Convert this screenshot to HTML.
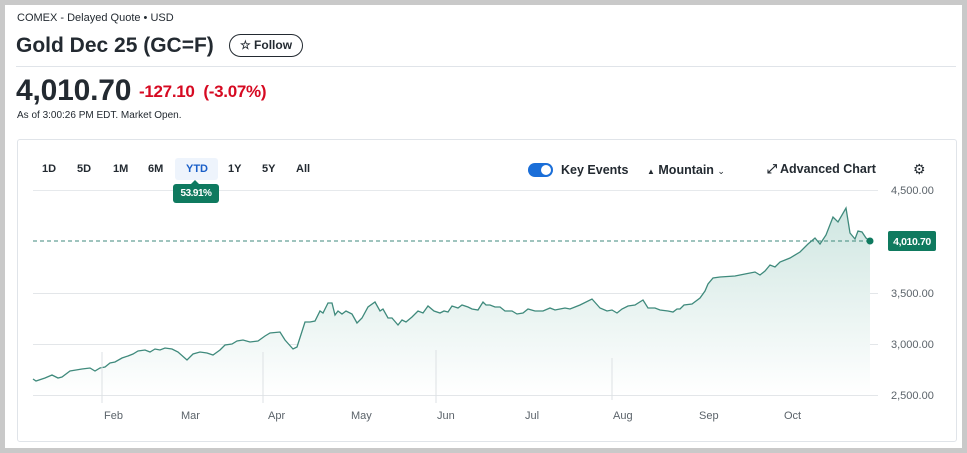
<!DOCTYPE html>
<html><head><meta charset="utf-8"><style>
body{margin:0;width:967px;height:453px;background:#c9c9c9;font-family:"Liberation Sans",sans-serif;position:relative;overflow:hidden;color:#232a31}
.page{position:absolute;left:5px;top:5px;width:957px;height:443px;background:#fff}
.a{position:absolute;white-space:nowrap}
</style></head><body>
<div class="page"></div>
<div class="a" style="left:17px;top:12px;font-size:11px">COMEX - Delayed Quote • USD</div>
<div class="a" style="left:16px;top:34px;font-size:21px;font-weight:bold">Gold Dec 25 (GC=F)</div>
<div class="a" style="left:229px;top:34px;width:72px;height:21px;border:1px solid #232a31;border-radius:12px;font-size:12px;font-weight:bold;line-height:21px;text-align:center">☆ Follow</div>
<div class="a" style="left:16px;top:66px;width:940px;height:1px;background:#e0e4e9"></div>
<div class="a" style="left:16px;top:74px;font-size:30px;font-weight:bold;letter-spacing:-0.2px">4,010.70</div>
<div class="a" style="left:139px;top:82px;font-size:17px;font-weight:bold;color:#d60a22;letter-spacing:-0.3px">-127.10&nbsp; (-3.07%)</div>
<div class="a" style="left:17px;top:110px;font-size:10px">As of 3:00:26 PM EDT. Market Open.</div>
<div class="a" style="left:17px;top:139px;width:938px;height:301px;border:1px solid #e0e4e9;border-radius:3px"></div>
<div class="a" style="top:163px;font-size:11px;font-weight:bold;left:42px">1D</div>
<div class="a" style="top:163px;font-size:11px;font-weight:bold;left:77px">5D</div>
<div class="a" style="top:163px;font-size:11px;font-weight:bold;left:113px">1M</div>
<div class="a" style="top:163px;font-size:11px;font-weight:bold;left:148px">6M</div>
<div class="a" style="top:158px;left:175px;width:43px;height:22px;background:#eef4fc;border-radius:3px"></div>
<div class="a" style="top:163px;font-size:11px;font-weight:bold;left:186px;color:#1a5fc8">YTD</div>
<div class="a" style="top:163px;font-size:11px;font-weight:bold;left:228px">1Y</div>
<div class="a" style="top:163px;font-size:11px;font-weight:bold;left:262px">5Y</div>
<div class="a" style="top:163px;font-size:11px;font-weight:bold;left:296px">All</div>
<div class="a" style="left:33px;top:190px;width:845px;height:1px;background:#e6e9ec"></div>
<div class="a" style="left:191px;top:180px;width:0;height:0;border:4px solid transparent;border-bottom-color:#0f7a5f;border-top:0"></div>
<div class="a" style="left:173px;top:184px;width:46px;height:19px;background:#0f7a5f;border-radius:3px;color:#fff;font-size:10px;font-weight:bold;text-align:center;line-height:19px;letter-spacing:-.5px">53.91%</div>
<div class="a" style="left:528px;top:163px;width:25px;height:14px;background:#1a6ed8;border-radius:8px"><div style="position:absolute;right:2px;top:2px;width:10px;height:10px;border-radius:5px;background:#fff"></div></div>
<div class="a" style="left:561px;top:163px;font-size:12.5px;font-weight:bold">Key Events</div>
<div class="a" style="left:647px;top:163px;font-size:12.5px;font-weight:bold"><span style="font-size:8px">▲</span> Mountain <span style="font-size:9px;font-weight:normal">⌄</span></div>
<div class="a" style="left:767px;top:162px;font-size:12.5px;font-weight:bold">⤢ Advanced Chart</div>
<div class="a" style="left:913px;top:161px;font-size:14px">⚙</div>
<svg class="a" style="left:0;top:0" width="967" height="453">
<defs><linearGradient id="g" x1="0" y1="0" x2="0" y2="1"><stop offset="0" stop-color="#cfe6e1"/><stop offset="1" stop-color="#ffffff"/></linearGradient></defs>
<g stroke="#e3e6e9" stroke-width="1"><line x1="33" y1="293.5" x2="878" y2="293.5"/><line x1="33" y1="344.5" x2="878" y2="344.5"/><line x1="33" y1="395.5" x2="878" y2="395.5"/></g>
<polygon fill="url(#g)" points="33,395 33,379 36,381 45,378 52,375 58,378 62,377 70,371 76,370 82,369 90,368 95,371 100,368 105,367 110,363 115,362 122,358 128,356 133,354 138,351 145,350 150,352 155,349 160,350 165,348 172,349 178,352 187,360 193,354 200,352 207,353 213,355 220,350 225,345 232,344 237,341 243,340 250,342 258,341 265,336 270,333 280,332 285,340 293,349 297,347 305,322 310,322 315,321 320,311 323,313 328,303 332,303 335,315 338,311 342,314 346,311 352,314 357,323 362,318 368,307 375,302 380,311 383,309 388,318 392,318 398,325 402,320 406,322 412,317 418,311 423,313 428,306 434,311 440,313 444,311 448,312 452,306 458,308 462,305 468,307 472,309 478,310 483,302 486,305 490,305 495,307 500,307 505,311 512,311 517,314 523,313 528,309 535,311 543,311 550,308 555,310 560,309 565,308 570,309 575,307 580,305 592,299 600,308 607,311 612,310 617,313 622,309 628,306 635,305 643,300 648,308 655,308 660,310 668,311 673,312 677,309 680,309 684,305 692,304 700,298 705,291 708,284 713,278 720,277 735,276 745,274 755,272 760,275 765,271 770,265 775,267 780,262 790,258 800,252 808,244 815,238 820,244 826,235 833,217 838,222 846,208 850,233 855,239 858,231 862,232 866,238 870,241 870,395"/>
<line x1="33" y1="241" x2="870" y2="241" stroke="#3f8a7c" stroke-dasharray="4,3" stroke-width="1"/>
<polyline fill="none" stroke="#3f8a7c" stroke-width="1.3" points="33,379 36,381 45,378 52,375 58,378 62,377 70,371 76,370 82,369 90,368 95,371 100,368 105,367 110,363 115,362 122,358 128,356 133,354 138,351 145,350 150,352 155,349 160,350 165,348 172,349 178,352 187,360 193,354 200,352 207,353 213,355 220,350 225,345 232,344 237,341 243,340 250,342 258,341 265,336 270,333 280,332 285,340 293,349 297,347 305,322 310,322 315,321 320,311 323,313 328,303 332,303 335,315 338,311 342,314 346,311 352,314 357,323 362,318 368,307 375,302 380,311 383,309 388,318 392,318 398,325 402,320 406,322 412,317 418,311 423,313 428,306 434,311 440,313 444,311 448,312 452,306 458,308 462,305 468,307 472,309 478,310 483,302 486,305 490,305 495,307 500,307 505,311 512,311 517,314 523,313 528,309 535,311 543,311 550,308 555,310 560,309 565,308 570,309 575,307 580,305 592,299 600,308 607,311 612,310 617,313 622,309 628,306 635,305 643,300 648,308 655,308 660,310 668,311 673,312 677,309 680,309 684,305 692,304 700,298 705,291 708,284 713,278 720,277 735,276 745,274 755,272 760,275 765,271 770,265 775,267 780,262 790,258 800,252 808,244 815,238 820,244 826,235 833,217 838,222 846,208 850,233 855,239 858,231 862,232 866,238 870,241"/>
<circle cx="870" cy="241" r="3.5" fill="#0f7a5f"/>
<g stroke="#dde1e4"><line x1="102" y1="352" x2="102" y2="403"/><line x1="263" y1="352" x2="263" y2="403"/><line x1="436" y1="350" x2="436" y2="403"/><line x1="612" y1="358" x2="612" y2="400"/></g>
<g font-family="Liberation Sans" font-size="11" fill="#5b636a">
<text x="104" y="419">Feb</text><text x="181" y="419">Mar</text><text x="268" y="419">Apr</text><text x="351" y="419">May</text><text x="437" y="419">Jun</text><text x="525" y="419">Jul</text><text x="613" y="419">Aug</text><text x="699" y="419">Sep</text><text x="784" y="419">Oct</text>
<text x="891" y="194">4,500.00</text><text x="891" y="297">3,500.00</text><text x="891" y="348">3,000.00</text><text x="891" y="399">2,500.00</text></g>
<rect x="888" y="231" width="48" height="20" rx="2" fill="#0f7a5f"/>
<text x="912" y="245" text-anchor="middle" font-family="Liberation Sans" font-size="10.5" font-weight="bold" fill="#fff" letter-spacing="-0.4">4,010.70</text>
</svg>
</body></html>
